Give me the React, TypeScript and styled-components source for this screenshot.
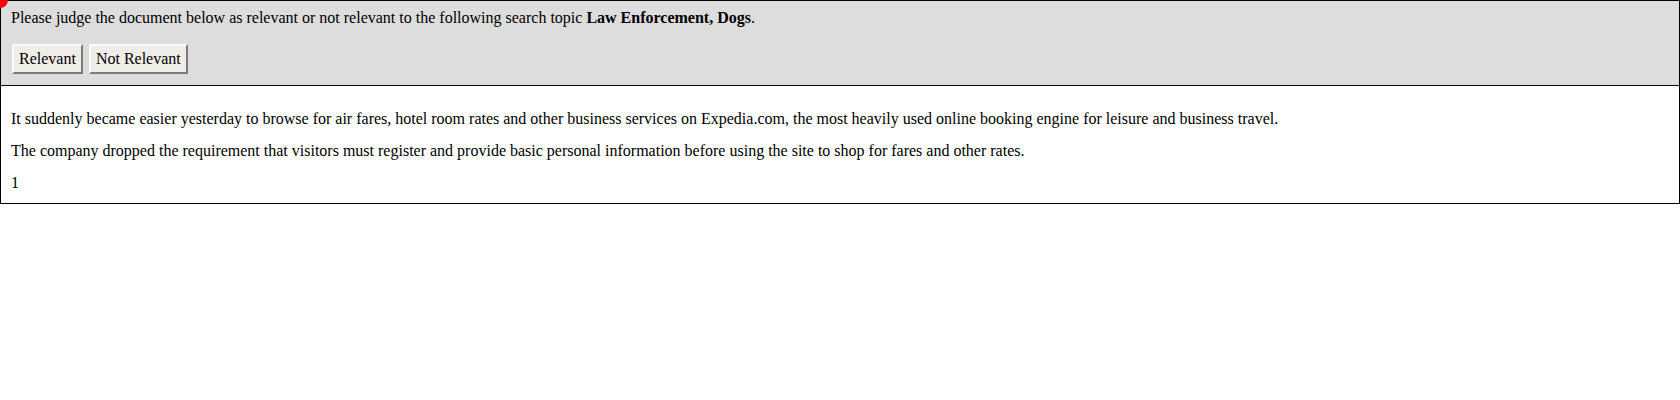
import React from 'react'
import styled, { createGlobalStyle } from 'styled-components'

const GlobalStyle = createGlobalStyle`
  body {
    margin: 0;
    background: white;
    font-family: "Liberation Serif", "Times New Roman", serif;
    font-size: 16px;
    color: black;
  }
`

const Frame = styled.div`
  position: relative;
  border: 1px solid black;
`

const Marker = styled.span`
  position: absolute;
  left: -9px;
  top: -9px;
  width: 16px;
  height: 16px;
  border-radius: 50%;
  background-color: #ff0000;
`

const Prompt = styled.div`
  background-color: #dddddd;
  border-bottom: 1px solid black;
  padding: 8px 10px 11px;
`

const Question = styled.div`
  line-height: 18px;
`

const Actions = styled.div`
  display: flex;
  gap: 6px;
  margin-top: 17px;
  padding-left: 1px;
`

const JudgeButton = styled.button`
  font-family: "Liberation Serif", "Times New Roman", serif;
  font-size: 16px;
  color: black;
  background-color: #f0ede8;
  border: 2px solid;
  border-color: #fafafa #7a7a7a #7a7a7a #fafafa;
  padding: 4px 5px 4px;
  line-height: 18px;
  cursor: pointer;
`

const Document = styled.div`
  padding: 23px 10px 10px;
`

const Para = styled.p`
  margin: 0 0 12px;
  line-height: 20px;

  &:last-child {
    margin-bottom: 0;
  }
`

const App = () => {
  const paragraphs = [
    'It suddenly became easier yesterday to browse for air fares, hotel room rates and other business services on Expedia.com, the most heavily used online booking engine for leisure and business travel.',
    'The company dropped the requirement that visitors must register and provide basic personal information before using the site to shop for fares and other rates.',
    '1',
  ]

  return (
    <>
      <GlobalStyle />
      <Frame>
        <Marker />
        <Prompt>
          <Question>
            Please judge the document below as relevant or not relevant to the following search topic{' '}
            <b>Law Enforcement, Dogs</b>.
          </Question>
          <Actions>
            <JudgeButton>Relevant</JudgeButton>
            <JudgeButton>Not Relevant</JudgeButton>
          </Actions>
        </Prompt>
        <Document>
          {paragraphs.map((text, i) => (
            <Para key={i}>{text}</Para>
          ))}
        </Document>
      </Frame>
    </>
  )
}

export default App
